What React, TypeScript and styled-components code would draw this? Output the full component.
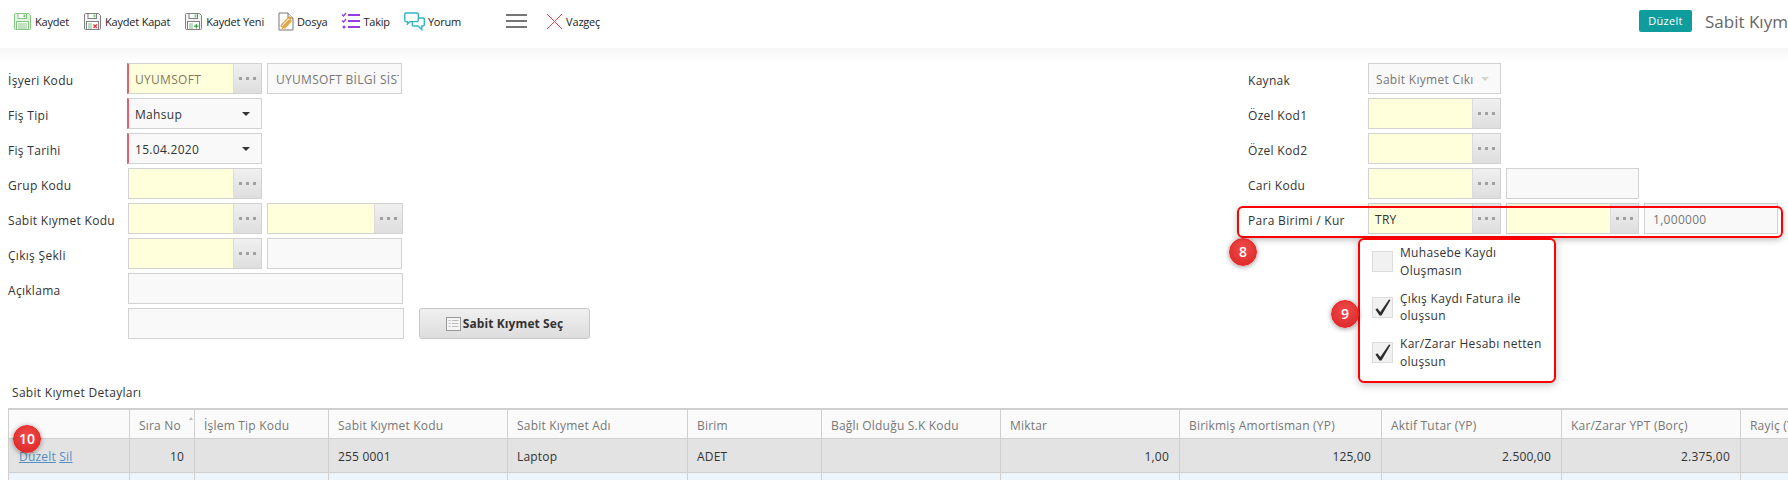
import styled, { createGlobalStyle } from 'styled-components';

const GlobalStyle = createGlobalStyle`
  html, body {
    margin: 0;
    padding: 0;
    background: #fff;
    overflow: hidden;
  }
  * {
    box-sizing: border-box;
  }
`;

const FONT = `'Open Sans', 'Noto Sans', sans-serif`;

function FloppyIcon({ tone, mark }: { tone: string; mark?: 'x' | 'plus' }) {
  const fill = mark ? '#f4f4f4' : '#e4f3e2';
  return (
    <svg width="19" height="19" viewBox="0 0 19 19" fill="none">
      <path d="M1.5 2.5a1 1 0 0 1 1-1h13l2 2v13a1 1 0 0 1-1 1h-14a1 1 0 0 1-1-1z" fill={fill} stroke={tone} />
      <rect x="5" y="1.5" width="8.5" height="5" fill="#fff" stroke={tone} />
      <rect x="10.5" y="2.5" width="2" height="3" fill={mark ? '#8fc48f' : tone} />
      <rect x="3.5" y="9.5" width="12" height="8" fill="#fff" stroke={tone} />
      {mark ? (
        <>
          <path d="M5 12h4M5 14h4M5 16h4" stroke="#7fb98a" />
          {mark === 'x' ? (
            <path d="M10.5 12.5l3.5 3.5M14 12.5l-3.5 3.5" stroke="#e0343c" strokeWidth="1.3" />
          ) : (
            <path d="M12.3 12v4.5M10 14.2h4.6" stroke="#3fa14a" strokeWidth="1.3" />
          )}
        </>
      ) : (
        <path d="M5 12h9M5 14h9M5 16h9" stroke={tone} />
      )}
    </svg>
  );
}

function FileClipIcon() {
  return (
    <svg width="16" height="19" viewBox="0 0 16 19" fill="none">
      <path d="M1 1h9l5 5v12H1z" fill="#fff" stroke="#777" />
      <path d="M10 1v5h5" fill="#eee" stroke="#777" />
      <path
        d="M4 17l8.500-9.500c1.200-1.500-.8-3.300-2.200-1.900L3.500 13c-1 1.200.5 2.400 1.500 1.400L11 8M6.500 16.500l7-8"
        stroke="#e3a544"
        strokeWidth="1.300"
      />
    </svg>
  );
}

function ChecklistIcon() {
  return (
    <svg width="19" height="18" viewBox="0 0 19 18" fill="none" stroke="#9a3de0">
      <path d="M1 2.500l1.500 1.500L5 1M1 8.500L2.500 10 5 7" strokeWidth="1.300" />
      <circle cx="3" cy="15" r="1.500" fill="#9a3de0" stroke="none" />
      <path d="M7 3h12M7 9h12M7 15h12" strokeWidth="2" />
    </svg>
  );
}

function ChatIcon() {
  return (
    <svg width="21" height="19" viewBox="0 0 21 19" fill="none" stroke="#2fb6c6" strokeWidth="1.400">
      <path d="M2 1h11a1.300 1.300 0 0 1 1.300 1.300v6a1.300 1.300 0 0 1-1.300 1.300H6l-2.500 2.400V9.600H2A1.300 1.300 0 0 1 .8 8.300v-6A1.300 1.300 0 0 1 2 1z" />
      <path d="M14.500 6H19a1.300 1.300 0 0 1 1.300 1.300v5.400A1.300 1.300 0 0 1 19 14h-1.200v3.500L14 14H9.500a1.300 1.300 0 0 1-1.300-1.300V10" />
    </svg>
  );
}

function CloseIcon() {
  return (
    <svg width="17" height="17" viewBox="0 0 17 17" fill="none" stroke="#e8404a">
      <path d="M1 1l15 15M16 1L1 16" />
    </svg>
  );
}

function ListIcon() {
  return (
    <svg width="15" height="14" viewBox="0 0 15 14" fill="none">
      <rect x=".5" y=".5" width="14" height="13" fill="#f5f5f5" stroke="#999" />
      <path d="M2.500 3.500h2M2.500 6.500h2M2.500 9.500h2M6 3.500h6.500M6 6.500h6.500M6 9.500h6.500" stroke="#bbb" />
    </svg>
  );
}

function CheckMark() {
  return (
    <svg width="16" height="17" viewBox="0 0 16 17" fill="none">
      <path d="M.5 10.500l1.800-1.200 3 3.700L14 .5l1.500.6L6.500 16.500H4.500z" fill="#2e2e2e" />
    </svg>
  );
}

function Lookup({ value, width, required, muted }: { value?: string; width: number; required?: boolean; muted?: boolean }) {
  return (
    <LookupBox $width={width} $required={required}>
      <LookupInput $muted={muted}>{value}</LookupInput>
      <LookupButton><i /><i /><i /></LookupButton>
    </LookupBox>
  );
}

const columns = [
  { title: '', width: 121 },
  { title: 'Sıra No', width: 65, sorted: true },
  { title: 'İşlem Tip Kodu', width: 134 },
  { title: 'Sabit Kıymet Kodu', width: 179 },
  { title: 'Sabit Kıymet Adı', width: 180 },
  { title: 'Birim', width: 134 },
  { title: 'Bağlı Olduğu S.K Kodu', width: 179 },
  { title: 'Miktar', width: 179 },
  { title: 'Birikmiş Amortisman (YP)', width: 202 },
  { title: 'Aktif Tutar (YP)', width: 180 },
  { title: 'Kar/Zarar YPT (Borç)', width: 179 },
  { title: 'Rayiç (YP)', width: 180 },
];

export default function App() {
  return (
    <Page>
      <GlobalStyle />
      <Toolbar>
        <ToolItem><FloppyIcon tone="#84c584" /><span>Kaydet</span></ToolItem>
        <ToolItem><FloppyIcon tone="#808080" mark="x" /><span>Kaydet Kapat</span></ToolItem>
        <ToolItem><FloppyIcon tone="#808080" mark="plus" /><span>Kaydet Yeni</span></ToolItem>
        <ToolItem><FileClipIcon /><span>Dosya</span></ToolItem>
        <ToolItem><ChecklistIcon /><span>Takip</span></ToolItem>
        <ToolItem><ChatIcon /><span>Yorum</span></ToolItem>
        <MenuBars><i /><i /><i /></MenuBars>
        <ToolItem><CloseIcon /><span>Vazgeç</span></ToolItem>
        <TitleArea>
          <StateBadge>Düzelt</StateBadge>
          <PageTitle>Sabit Kıymet Çıkışı</PageTitle>
        </TitleArea>
      </Toolbar>

      <Form>
        <LeftColumn>
          <Row>
            <Label>İşyeri Kodu</Label>
            <Lookup value="UYUMSOFT" width={135} required muted />
            <TextBox $width={135} $muted><ClippedText>UYUMSOFT BİLGİ SİST</ClippedText></TextBox>
          </Row>
          <Row>
            <Label>Fiş Tipi</Label>
            <SelectBox $width={135} $required>Mahsup<Caret /></SelectBox>
          </Row>
          <Row>
            <Label>Fiş Tarihi</Label>
            <SelectBox $width={135} $required>15.04.2020<Caret /></SelectBox>
          </Row>
          <Row>
            <Label>Grup Kodu</Label>
            <Lookup width={134} />
          </Row>
          <Row>
            <Label>Sabit Kıymet Kodu</Label>
            <Lookup width={134} />
            <Lookup width={136} />
          </Row>
          <Row>
            <Label>Çıkış Şekli</Label>
            <Lookup width={134} />
            <TextBox $width={135} />
          </Row>
          <Row>
            <Label>Açıklama</Label>
            <TextBox $width={275} />
          </Row>
          <Row>
            <Label />
            <TextBox $width={276} />
            <PickButton><ListIcon />Sabit Kıymet Seç</PickButton>
          </Row>
        </LeftColumn>

        <RightColumn>
          <Row>
            <Label>Kaynak</Label>
            <SelectBox $width={133} $disabled>Sabit Kıymet Cıkı<Caret $light /></SelectBox>
          </Row>
          <Row>
            <Label>Özel Kod1</Label>
            <Lookup width={133} />
          </Row>
          <Row>
            <Label>Özel Kod2</Label>
            <Lookup width={133} />
          </Row>
          <Row>
            <Label>Cari Kodu</Label>
            <Lookup width={133} />
            <TextBox $width={133} />
          </Row>
          <Row>
            <Label>Para Birimi / Kur</Label>
            <Lookup value="TRY" width={133} />
            <Lookup width={133} />
            <TextBox $width={134} $muted>1,000000</TextBox>
            <RowOutline />
            <NumberBadge $left={-19} $top={35}>8</NumberBadge>
          </Row>
          <CheckGroup>
            <CheckRow>
              <CheckBox />
              <CheckLabel>Muhasebe Kaydı Oluşmasın</CheckLabel>
            </CheckRow>
            <CheckRow>
              <CheckBox><CheckMark /></CheckBox>
              <CheckLabel>Çıkış Kaydı Fatura ile oluşsun</CheckLabel>
            </CheckRow>
            <CheckRow>
              <CheckBox><CheckMark /></CheckBox>
              <CheckLabel>Kar/Zarar Hesabı netten oluşsun</CheckLabel>
            </CheckRow>
            <NumberBadge $left={-29} $top={60}>9</NumberBadge>
          </CheckGroup>
        </RightColumn>
      </Form>

      <SectionTitle>Sabit Kıymet Detayları</SectionTitle>
      <GridWrap>
        <NumberBadge $left={5} $top={17}>10</NumberBadge>
        <Grid>
          <colgroup>
            {columns.map((c) => (
              <col key={c.title} width={c.width} />
            ))}
          </colgroup>
          <thead>
            <tr>
              {columns.map((c) => (
                <HeadCell key={c.title}>
                  {c.title}
                  {c.sorted && <SortMark />}
                </HeadCell>
              ))}
            </tr>
          </thead>
          <tbody>
            <SelectedRow>
              <LinkCell>
                <RowLink>Düzelt</RowLink> <RowLink>Sil</RowLink>
              </LinkCell>
              <Cell $right>10</Cell>
              <Cell />
              <Cell>255 0001</Cell>
              <Cell>Laptop</Cell>
              <Cell>ADET</Cell>
              <Cell />
              <Cell $right>1,00</Cell>
              <Cell $right>125,00</Cell>
              <Cell $right>2.500,00</Cell>
              <Cell $right>2.375,00</Cell>
              <Cell />
            </SelectedRow>
            <AltRow>
              {columns.map((c) => (
                <Cell key={c.title} />
              ))}
            </AltRow>
          </tbody>
        </Grid>
      </GridWrap>
    </Page>
  );
}

const Page = styled.div`
  width: 1788px;
  height: 480px;
  overflow: hidden;
  font: 12px/17px ${FONT};
  letter-spacing: 0.3px;
  color: #333;
  background: #fff;
`;

const Toolbar = styled.div`
  display: flex;
  align-items: center;
  gap: 14px;
  height: 48px;
  padding: 0 0 6px 13px;
  background: #fff;
`;

const ToolItem = styled.div`
  display: flex;
  align-items: center;
  gap: 3px;
  font-size: 11px;
  letter-spacing: -0.2px;
  color: #222;
`;

const MenuBars = styled.div`
  display: flex;
  flex-direction: column;
  gap: 4px;
  width: 21px;
  margin: 0 5px 0 31px;

  i {
    display: block;
    height: 2px;
    background: #757575;
  }
`;

const TitleArea = styled.div`
  display: flex;
  align-items: center;
  gap: 13px;
  width: 149px;
  margin-left: auto;
  overflow: hidden;
  white-space: nowrap;
`;

const StateBadge = styled.span`
  flex: none;
  width: 53px;
  height: 22px;
  border-radius: 2px;
  background: #0e9c9c;
  color: #fff;
  font-size: 11px;
  line-height: 22px;
  text-align: center;
`;

const PageTitle = styled.span`
  font-size: 17px;
  letter-spacing: 0;
  color: #666;
`;

const Form = styled.div`
  display: grid;
  grid-template-columns: 1248px 1fr;
  height: 336px;
  padding-top: 15px;
  background: linear-gradient(#f6f6f6, #fff 14px);
`;

const LeftColumn = styled.div`
  display: flex;
  flex-direction: column;
  gap: 4px;
  padding-left: 8px;
`;

const RightColumn = styled.div`
  display: flex;
  flex-direction: column;
  gap: 4px;
`;

const Row = styled.div`
  position: relative;
  display: flex;
  align-items: center;
  gap: 5px;
  height: 31px;
`;

const Label = styled.div`
  flex: none;
  width: 115px;
  padding-top: 4px;
  color: #333;
  white-space: nowrap;
`;

const LookupBox = styled.div<{ $width: number; $required?: boolean }>`
  flex: none;
  display: flex;
  width: ${(p) => p.$width}px;
  height: 31px;
  margin-left: ${(p) => (p.$required ? '-1px' : '0')};
  border: 1px solid #d2d2d2;
  border-left: ${(p) => (p.$required ? '2px solid #e2606c' : '1px solid #d2d2d2')};
`;

const LookupInput = styled.div<{ $muted?: boolean }>`
  flex: 1;
  padding: 1px 0 0 6px;
  background: #ffffdc;
  color: ${(p) => (p.$muted ? '#85795a' : '#333')};
  line-height: 29px;
`;

const LookupButton = styled.div`
  flex: none;
  display: flex;
  align-items: center;
  justify-content: center;
  gap: 4px;
  width: 28px;
  background: linear-gradient(#f0f0f0, #dedede);
  border-left: 1px solid #dcdcdc;

  i {
    display: block;
    width: 3px;
    height: 3px;
    background: #a0a0a0;
  }
`;

const TextBox = styled.div<{ $width: number; $muted?: boolean }>`
  flex: none;
  width: ${(p) => p.$width}px;
  height: 31px;
  padding: 1px 2px 0 8px;
  border: 1px solid #d2d2d2;
  background: #f9f9f9;
  color: ${(p) => (p.$muted ? '#777' : '#333')};
  line-height: 29px;
  white-space: nowrap;
`;

const ClippedText = styled.span`
  display: block;
  overflow: hidden;
`;

const SelectBox = styled.div<{ $width: number; $required?: boolean; $disabled?: boolean }>`
  flex: none;
  display: flex;
  align-items: center;
  justify-content: space-between;
  width: ${(p) => p.$width}px;
  height: 31px;
  margin-left: ${(p) => (p.$required ? '-1px' : '0')};
  padding: 1px 11px 0 ${(p) => (p.$required ? 6 : 7)}px;
  border: 1px solid #d2d2d2;
  border-left: ${(p) => (p.$required ? '2px solid #e2606c' : '1px solid #d2d2d2')};
  background: #f9f9f9;
  color: ${(p) => (p.$disabled ? '#777' : '#333')};
  white-space: nowrap;
`;

const Caret = styled.span<{ $light?: boolean }>`
  flex: none;
  width: 0;
  height: 0;
  border: 4px solid transparent;
  border-top: 4px solid ${(p) => (p.$light ? '#d5d5d5' : '#333')};
  border-bottom: 0;
`;

const PickButton = styled.div`
  flex: none;
  display: flex;
  align-items: center;
  justify-content: center;
  gap: 2px;
  width: 171px;
  height: 31px;
  margin-left: 10px;
  border: 1px solid #c8c8c8;
  border-radius: 3px;
  background: linear-gradient(#f0f0f0, #dddddd);
  color: #333;
  font-weight: 700;
  letter-spacing: 0.1px;
`;

const RowOutline = styled.div`
  position: absolute;
  left: -11px;
  top: 3px;
  width: 546px;
  height: 32px;
  border: 2px solid #f00;
  border-radius: 6px;
  box-shadow: 0 2px 6px rgba(0, 0, 0, 0.25);
  pointer-events: none;
`;

const NumberBadge = styled.div<{ $left: number; $top: number }>`
  position: absolute;
  left: ${(p) => p.$left}px;
  top: ${(p) => p.$top}px;
  z-index: 2;
  width: 28px;
  height: 28px;
  border: 1px solid #f02020;
  border-radius: 50%;
  background: radial-gradient(circle at 50% 35%, #f04a4a, #d92525);
  box-shadow: 0 1px 5px rgba(0, 0, 0, 0.4);
  color: #fff;
  font-size: 14px;
  font-weight: 600;
  letter-spacing: 0;
  line-height: 26px;
  text-align: center;
`;

const CheckGroup = styled.div`
  position: relative;
  display: flex;
  flex-direction: column;
  gap: 10.5px;
  width: 198px;
  height: 145px;
  margin-left: 110px;
  padding: 4px 0 0 12px;
  border: 2px solid #f00;
  border-radius: 6px;
  background: #fff;
  box-shadow: 0 2px 8px rgba(0, 0, 0, 0.25);
`;

const CheckRow = styled.div`
  display: flex;
  align-items: center;
  gap: 7px;
`;

const CheckBox = styled.div`
  flex: none;
  display: flex;
  align-items: center;
  justify-content: center;
  width: 21px;
  height: 21px;
  border: 1px solid #dcdcdc;
  background: #f1f1f1;
`;

const CheckLabel = styled.div`
  width: 150px;
  line-height: 17.5px;
`;

const SectionTitle = styled.div`
  height: 24px;
  padding-left: 12px;
  color: #333;
  line-height: 17px;
`;

const GridWrap = styled.div`
  position: relative;
  margin-left: 8px;
  height: 72px;
`;

const Grid = styled.table`
  table-layout: fixed;
  width: 1912px;
  border-collapse: collapse;
  border-top: 2px solid #d0d0d0;
  letter-spacing: 0.2px;
`;

const HeadCell = styled.th`
  position: relative;
  height: 29px;
  padding: 3px 9px 0;
  border: 1px solid #d0d0d0;
  border-top: 0;
  background: #fafafa;
  color: #777;
  font-weight: 400;
  text-align: left;
  white-space: nowrap;
`;

const SortMark = styled.span`
  position: absolute;
  right: 1px;
  top: 7px;
  width: 0;
  height: 0;
  border: 2px solid transparent;
  border-bottom: 3px solid #bbb;
  border-top: 0;
`;

const SelectedRow = styled.tr`
  background: #e3e3e3;
`;

const AltRow = styled.tr`
  background: #eef5fa;
`;

const Cell = styled.td<{ $right?: boolean }>`
  height: 34px;
  padding: 2px 10px 0 9px;
  border: 1px solid #d0d0d0;
  color: #333;
  text-align: ${(p) => (p.$right ? 'right' : 'left')};
  white-space: nowrap;
`;

const LinkCell = styled(Cell)`
  padding-left: 10px;
`;

const RowLink = styled.a`
  color: #4f8fc4;
  text-decoration: underline;
`;
